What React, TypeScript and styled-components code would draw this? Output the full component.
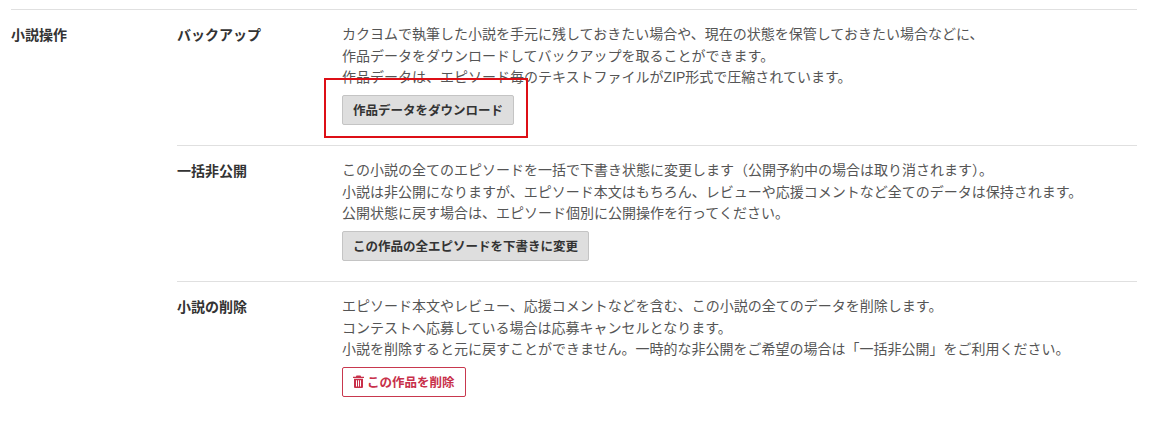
import * as React from 'react';
import styled, { createGlobalStyle } from 'styled-components';

const GlobalStyle = createGlobalStyle`
    html, body {
        margin: 0;
        padding: 0;
        background: #fff;
    }
    body {
        font-family: "Liberation Sans", "Noto Sans CJK JP", sans-serif;
        font-size: 14px;
        color: #555;
    }
`;

const Page = styled.div`
    position: relative;
    width: 1158px;
    height: 427px;
    overflow: hidden;
    padding: 9px 21px 0 11px;
    box-sizing: border-box;
`;

const Group = styled.section`
    display: flex;
    border-top: 1px solid #e0e0e0;
    padding-top: 14px;
`;

const GroupTitle = styled.h2`
    width: 166px;
    flex: none;
    margin: 0;
    padding-top: 1px;
    font-size: 14px;
    line-height: 21px;
    font-weight: bold;
    color: #333;
`;

const Rows = styled.div`
    flex: 1;
`;

const Row = styled.div`
    display: flex;
    box-sizing: border-box;
    padding-bottom: 20.5px;
    & + & {
        border-top: 1px solid #e0e0e0;
        padding-top: 14px;
    }
`;

const RowTitle = styled.h3`
    width: 165px;
    flex: none;
    margin: 0;
    padding-top: 1px;
    font-size: 14px;
    line-height: 21px;
    font-weight: bold;
    color: #333;
`;

const Body = styled.div`
    flex: 1;
`;

const Text = styled.p`
    margin: 0 0 6px;
    font-size: 14px;
    line-height: 21.5px;
    color: #555;
`;

const Button = styled.button`
    display: inline-flex;
    align-items: center;
    height: 30px;
    padding: 0 10px;
    box-sizing: border-box;
    border: 1px solid #c4c4c4;
    border-radius: 2px;
    background: #dedede;
    color: #333;
    font-family: inherit;
    font-size: 12.5px;
    font-weight: bold;
`;

const DangerButton = styled(Button)`
    gap: 3px;
    border-color: #c8384e;
    background: #fff;
    color: #c8304a;
`;

const Highlight = styled.div`
    position: absolute;
    left: 324px;
    top: 78px;
    width: 204px;
    height: 60px;
    box-sizing: border-box;
    border: 2px solid #dd0f16;
`;

const TrashIcon = () => (
    <svg width="11" height="13" viewBox="0 0 11 13" fill="currentColor">
        <path d="M3.5 0.5h4l.7 1.3H11v1.2H0V1.8h2.8z" />
        <path fillRule="evenodd" d="M1 3.8h9V12a1 1 0 0 1-1 1H2a1 1 0 0 1-1-1zM3 5.2v6.3h1V5.2zm2 0v6.3h1V5.2zm2 0v6.3h1V5.2z" />
    </svg>
);

export default function App() {
    return (
        <Page>
            <GlobalStyle />
            <Group>
                <GroupTitle>小説操作</GroupTitle>
                <Rows>
                    <Row>
                        <RowTitle>バックアップ</RowTitle>
                        <Body>
                            <Text>
                                カクヨムで執筆した小説を手元に残しておきたい場合や、現在の状態を保管しておきたい場合などに、<br />
                                作品データをダウンロードしてバックアップを取ることができます。<br />
                                作品データは、エピソード毎のテキストファイルがZIP形式で圧縮されています。
                            </Text>
                            <Button>作品データをダウンロード</Button>
                        </Body>
                    </Row>
                    <Row>
                        <RowTitle>一括非公開</RowTitle>
                        <Body>
                            <Text>
                                この小説の全てのエピソードを一括で下書き状態に変更します（公開予約中の場合は取り消されます）。<br />
                                小説は非公開になりますが、エピソード本文はもちろん、レビューや応援コメントなど全てのデータは保持されます。<br />
                                公開状態に戻す場合は、エピソード個別に公開操作を行ってください。
                            </Text>
                            <Button>この作品の全エピソードを下書きに変更</Button>
                        </Body>
                    </Row>
                    <Row>
                        <RowTitle>小説の削除</RowTitle>
                        <Body>
                            <Text>
                                エピソード本文やレビュー、応援コメントなどを含む、この小説の全てのデータを削除します。<br />
                                コンテストへ応募している場合は応募キャンセルとなります。<br />
                                小説を削除すると元に戻すことができません。一時的な非公開をご希望の場合は「一括非公開」をご利用ください。
                            </Text>
                            <DangerButton><TrashIcon />この作品を削除</DangerButton>
                        </Body>
                    </Row>
                </Rows>
            </Group>
            <Highlight />
        </Page>
    );
}
